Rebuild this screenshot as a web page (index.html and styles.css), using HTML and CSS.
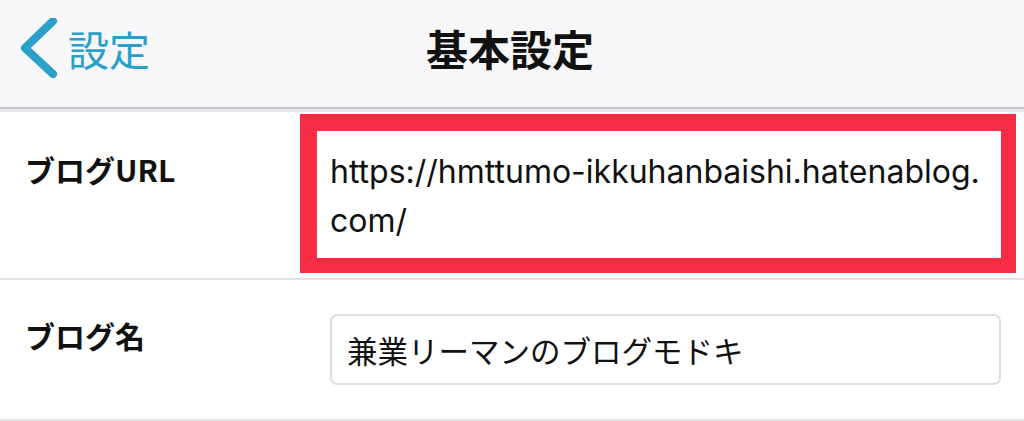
FILE: index.html
```html
<!DOCTYPE html>
<html lang="ja">
<head>
<meta charset="utf-8">
<title>基本設定</title>
<link rel="stylesheet" href="styles.css">
</head>
<body>
<header class="navbar">
  <a class="back" href="#">
    <svg class="back-icon" width="40" height="60" viewBox="0 0 40 60" aria-hidden="true">
      <polyline points="33,3 5,30 33,56" fill="none" stroke="#2a9fca" stroke-width="8" stroke-linecap="round" stroke-linejoin="round"/>
    </svg>
    <span class="back-label">設定</span>
  </a>
  <h1 class="title">基本設定</h1>
  <div class="spacer"></div>
</header>
<main class="form">
  <div class="row row-url">
    <div class="label">ブログURL</div>
    <div class="url-box">https://hmttumo-ikkuhanbaishi.hatenablog.<wbr>com/</div>
  </div>
  <div class="row row-name">
    <div class="label">ブログ名</div>
    <div class="text-field">兼業リーマンのブログモドキ</div>
  </div>
</main>
</body>
</html>
```

FILE: styles.css
```css
* { box-sizing: border-box; }

html, body {
  margin: 0;
  padding: 0;
  background: #ffffff;
  width: 1024px;
  height: 421px;
  overflow: hidden;
  font-family: "Noto Sans CJK JP", sans-serif;
  color: #111111;
}

.navbar {
  height: 109px;
  background: #f7f7f9;
  border-bottom: 2px solid #c4c4c8;
  display: grid;
  grid-template-columns: 1fr auto 1fr;
  align-items: center;
  padding: 0 24px 11px 20px;
}

.back {
  display: flex;
  align-items: center;
  gap: 8px;
  text-decoration: none;
  color: #2a9fca;
}

.back-icon { display: block; }

.back-label {
  font-size: 41px;
  line-height: 60px;
  font-weight: 400;
}

.title {
  margin: 0;
  font-size: 42px;
  line-height: 60px;
  font-weight: 700;
  color: #111111;
}

.form {
  border-top: 3px solid #e8e8eb;
}

.row {
  display: flex;
  align-items: flex-start;
  border-bottom: 2px solid #e2e2e5;
}

.label {
  padding: 37px 0 0 25px;
  font-size: 30px;
  line-height: 36px;
  font-weight: 700;
  color: #111111;
}

.row-url {
  padding: 2px 8px 5px 0;
}

.row-url .label { width: 300px; flex: none; }

.url-box {
  flex: 1;
  border-style: solid;
  border-color: #f92c45;
  border-width: 17px 15px 15px 17px;
  padding: 16px 0 13px 13px;
  font-family: "Inter", "Noto Sans CJK JP", sans-serif;
  font-size: 32px;
  line-height: 49px;
  color: #111111;
}

.row-name {
  padding: 34px 23px 34px 0;
}

.row-name .label { width: 330px; flex: none; padding-top: 5px; margin-top: -2px; }

.text-field {
  flex: 1;
  height: 71px;
  border: 2px solid #dedee2;
  border-radius: 7px;
  display: flex;
  align-items: center;
  padding: 0 15px;
  font-size: 30.5px;
  color: #111111;
}
```
